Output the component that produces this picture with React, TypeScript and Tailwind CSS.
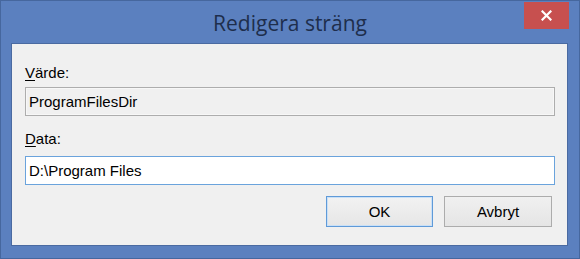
import React from "react";

export default function App() {
  const sans = { fontFamily: '"Liberation Sans", Arial, sans-serif' };
  return (
    <div className="w-[580px] h-[259px] bg-[#5b80bf] border border-[#46679e] flex flex-col overflow-hidden">
      <div className="relative h-[42px] shrink-0 flex justify-center pt-[8px]">
        <span
          className="text-[21px] leading-[28px] text-[#1e2e4c]"
          style={{ fontFamily: '"Open Sans", "Noto Sans", sans-serif' }}
        >
          Redigera sträng
        </span>
        <div className="absolute top-[1px] right-[10px] w-[45px] h-[27px] bg-[#c7504f] flex items-center justify-center">
          <svg width="11" height="11" viewBox="0 0 11 11">
            <path d="M1.5 1.5 L9.5 9.5 M9.5 1.5 L1.5 9.5" stroke="#ffffff" strokeWidth="2.2" strokeLinecap="square" />
          </svg>
        </div>
      </div>
      <div
        className="mx-[10px] mr-[11px] mb-[12px] flex-1 bg-[#f0f0f0] border border-[#4a6aa1] flex flex-col pl-[13px] pr-[12px] pt-[20px] text-[15px] leading-[17px] text-black"
        style={sans}
      >
        <div>
          <span className="underline underline-offset-[2px]">V</span>ärde:
        </div>
        <div className="mt-[6px] h-[29px] border border-[#adadad] bg-[#f0f0f0] flex items-center pl-[3px] shadow-[inset_0_0_0_1px_#f7f7f7]">
          ProgramFilesDir
        </div>
        <div className="mt-[14px]">
          <span className="underline underline-offset-[2px]">D</span>ata:
        </div>
        <div className="mt-[9px] h-[29px] border border-[#6aa3dc] bg-white flex items-center pl-[3px]">
          D:\Program Files
        </div>
        <div className="mt-[11px] flex justify-end gap-[11px] pr-[3px]">
          <div className="w-[107px] h-[31px] border border-[#5f9ad8] shadow-[inset_0_0_0_1px_#c9e0f7] bg-gradient-to-b from-[#f2f2f2] to-[#e6e6e6] flex items-center justify-center">
            OK
          </div>
          <div className="w-[108px] h-[31px] border border-[#acacac] bg-gradient-to-b from-[#f0f0f0] to-[#e5e5e5] flex items-center justify-center">
            Avbryt
          </div>
        </div>
      </div>
    </div>
  );
}
